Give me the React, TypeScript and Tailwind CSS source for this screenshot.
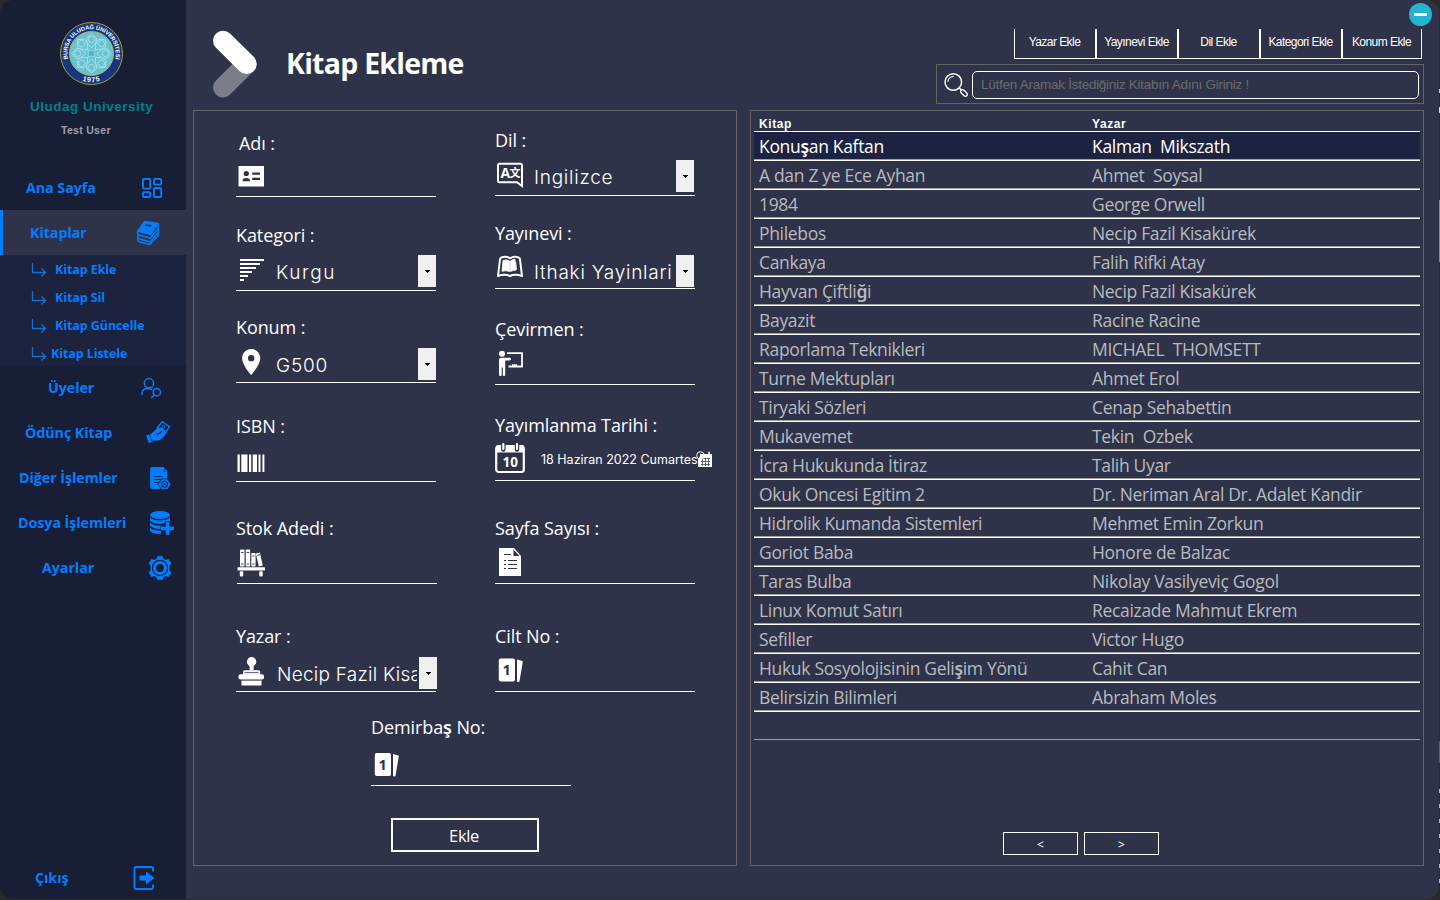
import type { ReactNode } from "react";
import { FaLeanpub } from "react-icons/fa6";
import { MdLocationOn } from "react-icons/md";

/* Segoe-like face in which a few Turkish letters come from a heavier fallback font. */
function Tr({ children }: { children: string }) {
  return (
    <>
      {children.split(/([şğ])/).map((part, i) =>
        part === "ş" || part === "ğ" ? (
          <span key={i} className="font-['Noto_Sans'] font-semibold">
            {part}
          </span>
        ) : (
          part
        ),
      )}
    </>
  );
}

function Canvas({ box, className = "", children }: { box: string; className?: string; children: ReactNode }) {
  const [, , w, h] = box.split(" ");
  return (
    <svg viewBox={box} width={w} height={h} className={`shrink-0 ${className}`} fill="none">
      {children}
    </svg>
  );
}

const BLUE = "#007eff";

function Logo() {
  return (
    <Canvas box="59 21 65 65">
      <defs>
        <path id="ringTop" d="M69.5 63.8A24.3 24.3 0 1 1 113.5 63.8" />
        <path id="ringBottom" d="M72 74.6A29 29 0 0 0 111 74.6" />
      </defs>
      <circle cx="91.5" cy="53.5" r="31" fill="#14377f" stroke="#b39a2c" strokeWidth="1" />
      <circle cx="91.5" cy="53.5" r="22" fill="#66c4d2" stroke="#c2ae3c" strokeWidth="1" />
      {[0, 45, 90, 135, 180, 225, 270, 315].map((a) => (
        <g key={a} transform={`rotate(${a} 91.5 53.5)`} stroke="#a8e3ea" strokeWidth="0.9">
          <path d="M91.5 48 L86.7 42.5 V38 L91.5 34 L96.3 38 V42.5 Z" />
          <circle cx="91.5" cy="39.5" r="3.2" />
        </g>
      ))}
      <rect x="88.2" y="50.2" width="6.6" height="6.6" fill="#4fb5c8" stroke="#a8e3ea" strokeWidth="0.7" />
      <text fill="#fff" textAnchor="middle" className="font-['Liberation_Sans'] text-[5.7px] font-bold">
        <textPath href="#ringTop" startOffset="50%">
          BURSA ULUDAĞ ÜNİVERSİTESİ
        </textPath>
      </text>
      <text fill="#fff" textAnchor="middle" className="font-['Liberation_Sans'] text-[7px] font-bold tracking-[0.8px]">
        <textPath href="#ringBottom" startOffset="50%">
          1975
        </textPath>
      </text>
    </Canvas>
  );
}

const navIcons = {
  home: (
    <Canvas box="141 177 22 22" className="mr-[23px]">
      <g stroke={BLUE} strokeWidth="1.9">
        <rect x="143" y="179" width="7.2" height="9.6" rx="1" />
        <rect x="154" y="179" width="7.2" height="5.6" rx="1" />
        <rect x="143" y="192.2" width="7.2" height="4.8" rx="1" />
        <rect x="154" y="188" width="7.2" height="9" rx="1" />
      </g>
    </Canvas>
  ),
  books: (
    <Canvas box="136 220 24 26" className="mr-[26px]">
      <path d="M144.5 221.5 L158 223.5 L150.5 234.2 L138 231 Z" fill={BLUE} stroke={BLUE} strokeWidth="1.6" strokeLinejoin="round" />
      <path d="M146 224.2 l6 .9 -1.3 1.7 -6-1z" fill="#2e3349" />
      <g stroke={BLUE} strokeWidth="1.5" strokeLinejoin="round" strokeLinecap="round">
        <path d="M138 231 q-1.4 2.6 .8 4 L150.3 238.3 L158.3 228 V223.8" />
        <path d="M138 235.4 q-.8 2.6 1 3.4 L150.3 242 L158.3 232 V229" />
        <path d="M138 239 q-.6 2 1 2.8 L149.8 244.6 L158.3 235.4 V232.5" />
      </g>
    </Canvas>
  ),
  members: (
    <Canvas box="140 377 22 22" className="mr-[24px]">
      <g stroke={BLUE} strokeWidth="1.5" strokeLinecap="round">
        <circle cx="149" cy="383.2" r="4.6" />
        <path d="M142 394.6 C141.8 388.5 147 387.2 151.6 389.6" />
        <circle cx="156.8" cy="392.2" r="3.7" />
        <path d="M154.4 395 L151.8 397.4" />
      </g>
    </Canvas>
  ),
  loan: (
    <Canvas box="145 421 26 25" className="mr-[15px]">
      <path d="M151.5 434.5 L157.5 429 Q160.5 427.4 163 429.2 L165.5 432 Q166 434 164 436.6 L160.5 440.3 Q158.5 442 156 441.6 L152.4 441.8 L149.8 436 Z" fill={BLUE} />
      <path d="M146 436.6 l3.2-1 2.6 7.4 -3 1.2z" fill={BLUE} />
      <path d="M157 429 L162.3 422.8 L169.4 427.8 L162 439" stroke={BLUE} strokeWidth="1.4" />
      <circle cx="163.8" cy="427.6" r="1.3" stroke={BLUE} />
      <path d="M156.5 435.4 q3.5-.6 5.5-3.2" stroke="#181e36" strokeWidth="1.3" />
    </Canvas>
  ),
  other: (
    <Canvas box="149 465 23 26" className="mr-[14px]">
      <path d="M152.5 467 h11 l3.8 4 v9 h-4 l-4 5 1 4 h-7.8 q-2.4 0-2.4-2.4 v-17.2 q0-2.4 2.4-2.4z" fill={BLUE} />
      <path d="M164 469 v2.4 h2" stroke="#181e36" strokeWidth="0.8" />
      <path d="M154 476.6h8.6M154 479.6h7M154 482.6h4.5" stroke="#181e36" strokeWidth="1" />
      <path d="M161.4 479 h6.2 l3.2 5.3 -3.2 5.3 h-6.2 l-3.2-5.3z" fill={BLUE} stroke="#181e36" strokeWidth="0.8" />
      <circle cx="164.5" cy="484.3" r="3" fill={BLUE} stroke="#181e36" strokeWidth="1.1" />
      <circle cx="164.5" cy="484.3" r="1" fill="#181e36" />
    </Canvas>
  ),
  files: (
    <Canvas box="149 510 26 26" className="mr-[11px]">
      <ellipse cx="160" cy="515" rx="10" ry="4" fill={BLUE} />
      <g fill={BLUE}>
        <path d="M150 517.3 q3 3.2 10 3.2 t10-3.2 v3.2 q-2.5 3.2-10 3.4 -7.5-.2-10-3.4z" />
        <path d="M150 522.4 q3 3.2 10 3.2 t7-1.3 v3 h-5 l-.6 1.6 q-8.4 .4-11.4-3.4z" />
        <path d="M150 527.6 q3 3.2 11 3.4 v3 q-8 .4-11-3.2z" />
      </g>
      <path d="M167.6 521.2v14M160.6 528.2h14" stroke="#181e36" strokeWidth="6" />
      <path d="M167.6 522.2v12.6M161 528.4h13" stroke={BLUE} strokeWidth="3.6" />
    </Canvas>
  ),
  settings: (
    <Canvas box="147 555 26 26" className="mr-[13px]">
      <path
        d="M157.8 556.5 h4.4 l1 2.6 2.3 1.2 2.9-.7 2.4 3.8 -1.8 2.3 v4.6 l1.8 2.3 -2.4 3.8 -2.9-.7 -2.3 1.2 -1 2.6 h-4.4 l-1-2.6 -2.3-1.2 -2.9.7 -2.4-3.8 1.8-2.3 v-4.6 l-1.8-2.3 2.4-3.8 2.9.7 2.3-1.2z"
        fill={BLUE}
        stroke={BLUE}
        strokeWidth="1"
        strokeLinejoin="round"
      />
      <circle cx="160" cy="568" r="7.6" stroke="#181e36" strokeWidth="1.2" />
      <circle cx="160" cy="568" r="3.9" fill="#181e36" />
    </Canvas>
  ),
  exit: (
    <Canvas box="132 865 24 26" className="mr-[30px]">
      <path d="M153 871.5 V868.5 q0-1.5-1.5-1.5 H136 q-1.5 0-1.5 1.5 V887.5 q0 1.5 1.5 1.5 H151.5 q1.5 0 1.5-1.5 V884.5" stroke={BLUE} strokeWidth="1.9" />
      <path d="M139.5 875.5 H146 V871.5 L154.5 878 L146 884.5 V880.5 H139.5z" fill={BLUE} />
    </Canvas>
  ),
};

function NavItem({ label, pad, icon }: { label: string; pad: string; icon: ReactNode }) {
  return (
    <div className={`flex h-[45px] shrink-0 items-center justify-between ${pad}`}>
      <span className="whitespace-nowrap font-['Open_Sans'] text-[14.3px] font-bold tracking-[-0.07px] text-[#007eff]">{label}</span>
      {icon}
    </div>
  );
}

function SubItem({ label, gap = "gap-2" }: { label: string; gap?: string }) {
  return (
    <div className={`flex h-7 items-center pl-[31px] ${gap}`}>
      <Canvas box="0 0 16 16" className="mt-[2px]">
        <path d="M1.5 1v9.5H14M10.5 6.5l4 4-4 4" stroke="#1470d2" strokeWidth="1.3" />
      </Canvas>
      <span className="whitespace-nowrap pt-[2px] font-['Open_Sans'] text-[12.5px] font-bold tracking-[-0.08px] text-[#007eff]">{label}</span>
    </div>
  );
}

function Sidebar() {
  return (
    <aside className="flex w-[186px] shrink-0 flex-col bg-[#181e36]">
      <div className="flex h-[165px] flex-col pt-[21px]">
        <div className="pl-[59px]">
          <Logo />
        </div>
        <div className="mt-[13px] pl-[30px] font-['Liberation_Sans'] text-[13.5px] font-bold leading-4 tracking-[0.5px] text-[#00808c]">
          Uludag University
        </div>
        <div className="mt-[7px] pl-[61px] font-['Liberation_Sans'] text-[10.5px] font-bold leading-4 tracking-[0.3px] text-[#9ea1b0]">Test User</div>
      </div>
      <NavItem label="Ana Sayfa" pad="pl-[26px]" icon={navIcons.home} />
      <div className="border-l-[3px] border-[#007eff] bg-[#2e3349]">
        <NavItem label="Kitaplar" pad="pl-[27px]" icon={navIcons.books} />
      </div>
      <div className="h-[110px] bg-[#1b233e]">
        <SubItem label="Kitap Ekle" />
        <SubItem label="Kitap Sil" />
        <SubItem label="Kitap Güncelle" />
        <SubItem label="Kitap Listele" gap="gap-1" />
      </div>
      <NavItem label="Üyeler" pad="pl-[48px]" icon={navIcons.members} />
      <NavItem label="Ödünç Kitap" pad="pl-[25px]" icon={navIcons.loan} />
      <NavItem label="Diğer İşlemler" pad="pl-[19px]" icon={navIcons.other} />
      <NavItem label="Dosya İşlemleri" pad="pl-[18px]" icon={navIcons.files} />
      <NavItem label="Ayarlar" pad="pl-[42px]" icon={navIcons.settings} />
      <div className="flex-1" />
      <div className="-mb-px">
        <NavItem label="Çıkış" pad="pl-[35px]" icon={navIcons.exit} />
      </div>
    </aside>
  );
}

function CardOne() {
  return (
    <g fill="#fff">
      <rect x="3.8" y="10.5" width="16.2" height="23" rx="2" />
      <path d="M22 11.5 l5.4 1.5 q.5 .2 .4 .8 L24.5 33.3 q-.2 .8-1.2 .6 l-1.3-.3z" />
      <text x="11.7" y="27" textAnchor="middle" fill="#2e3349" className="font-['Noto_Sans'] text-[14.5px] font-bold">
        1
      </text>
    </g>
  );
}

type FieldProps = {
  label: string;
  className?: string;
  labelClass?: string;
  box?: string;
  icon: ReactNode;
  value?: string;
  valueClass?: string;
  dropClass?: string;
  children?: ReactNode;
};

function Field({
  label,
  className = "",
  labelClass = "",
  box = "0 0 40 43",
  icon,
  value,
  valueClass = "tracking-[0.75px]",
  dropClass = "",
  children,
}: FieldProps) {
  return (
    <div className={`flex w-[200px] flex-col border-b border-white ${className}`}>
      <div className={`h-6 whitespace-nowrap font-['Open_Sans'] text-[18px] leading-6 tracking-[-0.1px] text-white ${labelClass}`}>
        <Tr>{label}</Tr>
      </div>
      <div className="flex flex-1 items-start">
        <Canvas box={box}>{icon}</Canvas>
        {value && (
          <div className={`flex min-w-0 flex-1 ${dropClass}`}>
            <span className={`h-8 min-w-0 flex-1 overflow-hidden whitespace-nowrap pt-[2px] font-['Inter'] text-[19px] font-light leading-[30px] text-white ${valueClass}`}>
              <span className="inline-block pt-px">{value}</span>
            </span>
            <span className="flex h-8 w-[18px] shrink-0 items-center justify-center bg-[#f0f0f0]">
              <svg width="5" height="3" viewBox="0 0 5 3" shapeRendering="crispEdges">
                <path d="M0 0h5v1H4v1H3v1H2V2H1V1H0z" fill="#000" />
              </svg>
            </span>
          </div>
        )}
        {children}
      </div>
    </div>
  );
}

function FormPanel() {
  return (
    <section className="flex h-[756px] w-[544px] shrink-0 flex-col border border-[#646464]">
      <div className="flex">
        <div className="ml-[42px] flex w-[259px] flex-col pt-5">
          <Field
            label="Adı :"
            className="h-[66px]"
            labelClass="pl-[3px]"
            icon={
              <g>
                <rect x="2.5" y="11" width="25.5" height="20.5" fill="#fff" />
                <circle cx="10.3" cy="18.5" r="2.6" fill="#2e3349" />
                <path d="M6.5 26.2 q0-3.2 3.8-3.2 t3.8 3.2z" fill="#2e3349" />
                <path d="M16.2 18.7h7.8M16.2 23.9h7.8" stroke="#2e3349" strokeWidth="2.3" />
              </g>
            }
          />
          <Field
            label="Kategori :"
            className="mt-[26px] h-[68px]"
            icon={
              <path shapeRendering="crispEdges" d="M4 13h24M4 17h20M4 21h16M4 25h12M4 29h8M4 33h4" stroke="#fff" strokeWidth="2" />
            }
            value="Kurgu"
            valueClass="tracking-[1.6px]"
            dropClass="pt-2"
          />
          <Field
            label="Konum :"
            className="mt-[24px] h-[68px]"
            icon={<MdLocationOn x="-0.3" y="7.5" size={31} color="#fff" />}
            value="G500"
            dropClass="pt-[9px]"
          />
          <Field
            label="ISBN :"
            className="mt-[31px] h-[68px]"
            icon={
              <g fill="#fff">
                <rect x="1.5" y="16.5" width="2.3" height="17.5" />
                <rect x="5.3" y="16.5" width="6.2" height="17.5" />
                <rect x="13" y="16.5" width="2.2" height="17.5" />
                <rect x="16.7" y="16.5" width="4.3" height="17.5" />
                <rect x="22.5" y="16.5" width="2" height="17.5" />
                <rect x="26.4" y="16.5" width="2" height="17.5" />
              </g>
            }
          />
          <Field
            label="Stok Adedi :"
            className="ml-px mt-[34px] h-[68px]"
            labelClass="-ml-px"
            icon={
              <g fill="#fff">
                <rect x="3" y="9.5" width="4.5" height="17" rx="0.8" />
                <rect x="8.7" y="9.5" width="4.5" height="17" rx="0.8" />
                <rect x="14.3" y="13" width="4.3" height="13.5" rx="0.8" />
                <path d="M18.8 13.4 l4-.9 3 13 -4 .9z" />
                <path d="M4 12.5h2.5M9.7 12.5h2.5M15.3 16h2.3M4 24h2.5M9.7 24h2.5M15.3 24h2.3M20 15.5l3-.7" stroke="#2e3349" strokeWidth="0.9" />
                <rect x="0.5" y="27.2" width="27.5" height="3.2" rx="0.5" />
                <rect x="2.8" y="31.2" width="3.4" height="5.3" rx="1" />
                <rect x="22.3" y="31.2" width="3.4" height="5.3" rx="1" />
              </g>
            }
          />
          <Field
            label="Yazar :"
            className="mt-[40px] h-[68px]"
            icon={
              <g fill="#fff">
                <circle cx="15.6" cy="13.8" r="4.7" />
                <path d="M12.8 16h5.6l-.8 3v3.5h-4v-3.5z" />
                <path d="M8.5 22.2h14.2q1.5 0 1.5 1.5v3H7v-3q0-1.5 1.5-1.5z" />
                <rect x="2.5" y="26.2" width="25.5" height="5.3" rx="2" />
                <rect x="5.5" y="32.8" width="20" height="4.7" rx="0.5" />
                <path d="M8.5 24.6h14" stroke="#2e3349" strokeWidth="0.8" />
                <path d="M5 32h21" stroke="#9a9cab" strokeWidth="0.9" />
              </g>
            }
            value="Necip Fazil Kisakürek"
            valueClass="ml-px mr-[2px] tracking-[0.25px]"
            dropClass="-mr-px pt-[9px]"
          />
        </div>
        <div className="flex flex-col pt-[17px]">
          <Field
            label="Dil :"
            className="h-[68px]"
            box="0 0 39 43"
            icon={
              <g>
                <path d="M4.5 11.8 H25.5 q1.5 0 1.5 1.5 V34 L22 30.2 H4.5 q-1.5 0-1.5-1.5 V13.3 q0-1.5 1.5-1.5z" stroke="#fff" strokeWidth="2" />
                <text x="5.6" y="26.3" fill="#fff" className="font-['Open_Sans'] text-[14px] font-bold">
                  A
                </text>
                <text x="14.4" y="25.3" fill="#fff" className="font-['Noto_Sans_CJK_SC'] text-[11px] font-bold">
                  文
                </text>
              </g>
            }
            value="Ingilizce"
            dropClass="pr-px pt-2"
          />
          <Field
            label="Yayınevi :"
            className="mt-[25px] h-[68px]"
            box="0 0 39 43"
            icon={
              <g>
                <path d="M3 31 L5 14.5 Q5.300 12.500 8 12 Q12 11.300 15 13.300 Q18 11.300 22 12 Q24.700 12.500 25 14.500 L27 31 Q20 28.500 15 31 Q10 28.500 3 31z" stroke="#fff" strokeWidth="2" strokeLinejoin="round" />
                <path d="M8 15.500 Q12 14 14.600 16 L14.600 26.500 Q11 25 7 26.300z M15.400 16 Q18 14 20 14.300 L20.800 25.300 Q18 25 15.400 26.500z" fill="#fff" stroke="#fff" strokeWidth="0.800" />
                <path d="M20.800 17l.8 7.800" stroke="#fff" strokeWidth="0.800" />
              </g>
            }
            value="Ithaki Yayinlari"
            dropClass="pr-px pt-[10px]"
          />
          <Field
            label="Çevirmen :"
            className="mt-[28px] h-[68px]"
            box="0 0 39 43"
            icon={
              <g>
                <circle cx="7" cy="12.8" r="3" fill="#fff" />
                <path d="M4 19 q0-2.2 2.2-2.2 H14.5 q1.5 0 1.5 1.3 t-1.5 1.3 H10.2 V34 q0 1-1.2 1 t-1.2-1 V26.5 H6.7 V34 q0 1-1.3 1 T4 34z" fill="#fff" />
                <path d="M12 12.2H27V25.5M27.8 25.5H13.5" stroke="#fff" strokeWidth="1.8" />
                <path d="M17 24.3h5" stroke="#fff" strokeWidth="2" />
              </g>
            }
          />
          <Field
            label="Yayımlanma Tarihi :"
            className="mt-[28px] h-[68px]"
            box="0 0 39 43"
            icon={
              <g>
                <rect x="1.2" y="9" width="27.6" height="26" rx="2.5" stroke="#fff" strokeWidth="2.2" />
                <path d="M1.5 8.5h27v7h-27z" fill="#fff" />
                <path d="M8.3 6.5v6M22 6.5v6" stroke="#2e3349" strokeWidth="4.5" strokeLinecap="round" />
                <path d="M8.3 7v5M22 7v5" stroke="#fff" strokeWidth="2.2" strokeLinecap="round" />
                <text x="15.3" y="30" textAnchor="middle" fill="#fff" className="font-['Open_Sans'] text-[13.5px] font-bold">
                  10
                </text>
              </g>
            }
          >
            <div className="relative ml-[7px] mt-[13px] flex h-5 w-[154px] items-center">
              <span className="whitespace-nowrap font-['Inter'] text-[12.5px] font-normal text-white">18 Haziran 2022 Cumartes</span>
              <Canvas box="0 0 17 17" className="absolute -right-[18px] top-[1px]">
                <path d="M5 3h11v13H2V9z" fill="#fff" />
                <path d="M5 7.5h9M5 10.5h9M5 13.5h9M6.5 7v8M9.5 7v8M12.5 7v8" stroke="#2e3349" strokeWidth="0.7" />
                <circle cx="4.5" cy="4.5" r="3.8" stroke="#fff" strokeWidth="1" />
                <path d="M4.5 2.5v2.5h2" stroke="#fff" strokeWidth="0.8" />
                <path d="M13 0.8v2.5" stroke="#fff" strokeWidth="1.5" />
              </Canvas>
            </div>
          </Field>
          <Field
            label="Sayfa Sayısı :"
            className="mt-[35px] h-[68px]"
            box="0 0 39 43"
            icon={
              <g>
                <path d="M4 8h15l7 8v20H4z" fill="#fff" />
                <path d="M18.5 9.5v6.500h6z" fill="#2e3349" />
                <path d="M9 14.5h7M13 20.5h9M13 24.5h9M13 28.5h9M9 20.5h2M9 24.5h2M9 28.5h2" stroke="#2e3349" strokeWidth="1.2" />
              </g>
            }
          />
          <Field label="Cilt No :" className="mt-[40px] h-[68px]" box="0 0 39 43" icon={<CardOne />} />
        </div>
      </div>
      <Field label="Demirbaş No:" className="ml-[177px] mt-[23px] h-[71px]" box="0 -3.500 39 43" icon={<CardOne />} />
      <button className="ml-[197px] mt-8 h-[34px] w-[148px] border-2 border-white pr-[2px] pt-[2px] font-['Open_Sans'] text-[16.5px] tracking-[-0.35px] text-white">
        Ekle
      </button>
    </section>
  );
}

const books: [string, string][] = [
  ["Konuşan Kaftan", "Kalman  Mikszath"],
  ["A dan Z ye Ece Ayhan", "Ahmet  Soysal"],
  ["1984", "George Orwell"],
  ["Philebos", "Necip Fazil Kisakürek"],
  ["Cankaya", "Falih Rifki Atay"],
  ["Hayvan Çiftliği", "Necip Fazil Kisakürek"],
  ["Bayazit", "Racine Racine"],
  ["Raporlama Teknikleri", "MICHAEL  THOMSETT"],
  ["Turne Mektupları", "Ahmet Erol"],
  ["Tiryaki Sözleri", "Cenap Sehabettin"],
  ["Mukavemet", "Tekin  Ozbek"],
  ["İcra Hukukunda İtiraz", "Talih Uyar"],
  ["Okuk Oncesi Egitim 2", "Dr. Neriman Aral Dr. Adalet Kandir"],
  ["Hidrolik Kumanda Sistemleri", "Mehmet Emin Zorkun"],
  ["Goriot Baba", "Honore de Balzac"],
  ["Taras Bulba", "Nikolay Vasilyeviç Gogol"],
  ["Linux Komut Satırı", "Recaizade Mahmut Ekrem"],
  ["Sefiller", "Victor Hugo"],
  ["Hukuk Sosyolojisinin Gelişim Yönü", "Cahit Can"],
  ["Belirsizin Bilimleri", "Abraham Moles"],
];

function TablePanel() {
  return (
    <section className="flex h-[756px] w-[674px] shrink-0 flex-col border border-[#646464] px-[3px]">
      <div className="grid h-[21px] grid-cols-[333px_1fr] items-center border-b border-white pl-[5px] pt-[5px] font-['Liberation_Sans'] text-[12px] font-bold leading-4 tracking-[0.6px] text-white">
        <span>Kitap</span>
        <span>Yazar</span>
      </div>
      {books.map(([title, author], i) => (
        <div key={title} className="border-b border-white">
          <div
            className={`grid h-7 grid-cols-[333px_1fr] items-center whitespace-pre border-b border-[#a0a0a0] pl-[5px] pt-px font-['Open_Sans'] text-[17.5px] leading-6 tracking-[-0.32px] ${
              i === 0 ? "bg-[#1c2340] text-white" : "text-[#b9babf]"
            }`}
          >
            <span>
              <Tr>{title}</Tr>
            </span>
            <span>{author}</span>
          </div>
        </div>
      ))}
      <div className="h-7 border-b border-[#a0a0a0]" />
      <div className="mt-[92px] flex gap-[6px] pl-[249px] font-['Open_Sans'] text-[12px] text-white">
        <button className="h-[23px] w-[75px] border border-white pt-[2px] leading-none">&lt;</button>
        <button className="h-[23px] w-[75px] border border-white pt-[2px] leading-none">&gt;</button>
      </div>
    </section>
  );
}

function Tab({ label, width = "w-[82px]" }: { label: string; width?: string }) {
  return (
    <button className={`h-[30px] whitespace-nowrap border-x border-b border-white pb-1 pr-px font-['Liberation_Sans'] text-[12px] tracking-[-0.55px] text-white ${width}`}>
      {label}
    </button>
  );
}

function Header() {
  return (
    <header className="flex h-[110px] justify-between">
      <div className="flex pl-[25px] pt-[28px]">
        <Canvas box="211 28 48 72">
          <path d="M223 87.5L246.7 64" stroke="#7b7d8a" strokeWidth="20" strokeLinecap="round" />
          <path d="M223 40.7L246.7 64" stroke="#fff" strokeWidth="20" strokeLinecap="round" />
        </Canvas>
        <h1 className="ml-[27px] mt-[15px] whitespace-nowrap font-['Open_Sans'] text-[28.5px] font-bold leading-10 tracking-[-0.75px] text-white">Kitap Ekleme</h1>
      </div>
      <div className="mr-[15px] flex w-[488px] flex-col items-end">
        <div className="-mr-2 flex h-[29px] items-start pt-[3px]">
          <svg width="23" height="23" viewBox="0 0 23 23">
            <circle cx="11.5" cy="11.5" r="11.5" fill="#24b4d2" />
            <path d="M5 11.5h13" stroke="#fff" strokeWidth="3" />
          </svg>
        </div>
        <div className="mr-[2px] flex">
          <Tab label="Yazar Ekle" />
          <Tab label="Yayınevi Ekle" />
          <Tab label="Dil Ekle" />
          <Tab label="Kategori Ekle" />
          <Tab label="Konum Ekle" width="w-[80px]" />
        </div>
        <div className="mt-[5px] flex h-10 w-[488px] border border-[#646464] pl-[6px] pt-[6px]">
          <Canvas box="943 71 28 28" className="mr-px">
            <g stroke="#fff" strokeLinecap="round">
              <circle cx="953.3" cy="82" r="8.3" strokeWidth="1.5" />
              <path d="M948 81.5 q.5-4.5 5.3-5" strokeWidth="1.1" />
              <path d="M959.3 88l2 2" strokeWidth="1.5" />
              <rect x="-1.9" y="-3.9" width="3.8" height="7.8" rx="1.9" strokeWidth="1.4" transform="translate(964 93) rotate(-45)" />
            </g>
          </Canvas>
          <div className="flex h-7 w-[447px] items-center rounded-[5px] border border-white pl-2 font-['Liberation_Sans'] text-[13.5px] tracking-[-0.26px] text-[#6b6b70]">
            Lütfen Aramak İstediğiniz Kitabın Adını Giriniz !
          </div>
        </div>
      </div>
    </header>
  );
}

/* Sliver of the desktop visible beside the window. */
function DesktopEdge() {
  return (
    <div className="flex w-px flex-col">
      <div className="mt-[89px] h-1 bg-[#c8c8c8]" />
      <div className="mt-[14px] h-[6px] bg-[#d8d8d8]" />
      <div className="mt-[87px] h-[62px] bg-[#8a8a8a]" />
      <div className="mt-[479px] h-[22px] bg-[#1b72b8]" />
      <div className="mt-[26px] flex flex-col gap-[11px]">
        {[0, 1, 2, 3, 4, 5, 6].map((n) => (
          <div key={n} className="h-1 bg-[#a9b9d0]" />
        ))}
      </div>
    </div>
  );
}

export default function App() {
  return (
    <div className="flex h-[900px] w-[1440px] overflow-hidden bg-[#2a2a2c]">
      <div className="flex h-[899px] w-[1439px] shrink-0 overflow-hidden rounded-[13px] bg-[#2e3349]">
        <Sidebar />
        <main className="flex flex-1 flex-col">
          <Header />
          <div className="flex gap-[13px] pl-[7px]">
            <FormPanel />
            <TablePanel />
          </div>
        </main>
      </div>
      <DesktopEdge />
    </div>
  );
}
